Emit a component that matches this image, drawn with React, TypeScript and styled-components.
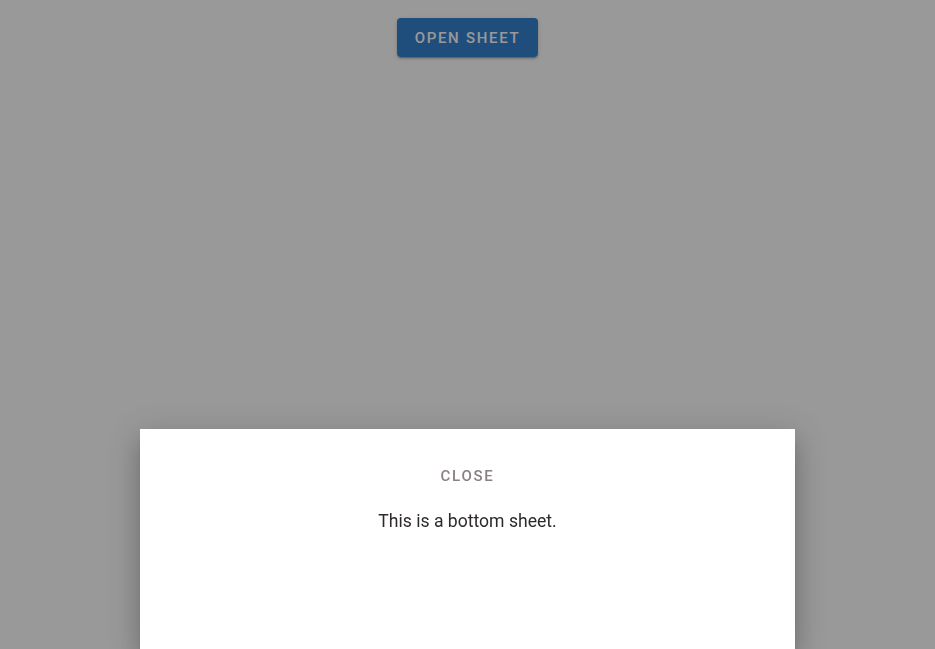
import { FC, useState } from "react";
import styled, { createGlobalStyle } from "styled-components";

const GlobalStyle = createGlobalStyle`
  html, body {
    margin: 0;
    padding: 0;
    height: 100%;
  }
  body {
    font-family: Roboto, "Liberation Sans", sans-serif;
    background: #ffffff;
  }
  #root {
    height: 100%;
  }
`;

const App: FC = () => {
  const [open, setOpen] = useState(true);
  return (
    <Page>
      <GlobalStyle />
      <OpenButton onClick={() => setOpen(true)}>Open sheet</OpenButton>
      {open && (
        <>
          <Backdrop onClick={() => setOpen(false)} />
          <Sheet>
            <CloseButton onClick={() => setOpen(false)}>Close</CloseButton>
            <SheetText>This is a bottom sheet.</SheetText>
          </Sheet>
        </>
      )}
    </Page>
  );
};

export default App;

const Page = styled.div({
  height: "100%",
  display: "flex",
  flexDirection: "column",
  alignItems: "center",
  paddingTop: "18px",
  boxSizing: "border-box",
});
const BaseButton = styled.button({
  fontFamily: "Roboto, 'Liberation Sans', sans-serif",
  fontWeight: 500,
  fontSize: "15px",
  letterSpacing: "1.7px",
  textTransform: "uppercase",
  border: "none",
  borderRadius: "4px",
  cursor: "pointer",
  display: "flex",
  alignItems: "center",
  justifyContent: "center",
});
const OpenButton = styled(BaseButton)({
  width: "141px",
  height: "39px",
  background: "#3482d0",
  color: "#ffffff",
  boxShadow:
    "0 3px 1px -2px rgba(0,0,0,.2), 0 2px 2px 0 rgba(0,0,0,.14), 0 1px 5px 0 rgba(0,0,0,.12)",
});
const Backdrop = styled.div({
  position: "fixed",
  inset: 0,
  background: "rgba(0, 0, 0, 0.4)",
});
const Sheet = styled.div({
  position: "fixed",
  left: "140px",
  right: "140px",
  bottom: 0,
  height: "220px",
  background: "#ffffff",
  display: "flex",
  flexDirection: "column",
  alignItems: "center",
  paddingTop: "29px",
  boxSizing: "border-box",
  boxShadow:
    "0 8px 10px -5px rgba(0,0,0,.2), 0 16px 24px 2px rgba(0,0,0,.14), 0 6px 30px 5px rgba(0,0,0,.12)",
});
const CloseButton = styled(BaseButton)({
  height: "36px",
  padding: "0 8px",
  background: "transparent",
  color: "#8a8080",
});
const SheetText = styled.p({
  margin: "15px 0 0",
  fontSize: "17.6px",
  lineHeight: "24px",
  color: "#2e2a2a",
});
